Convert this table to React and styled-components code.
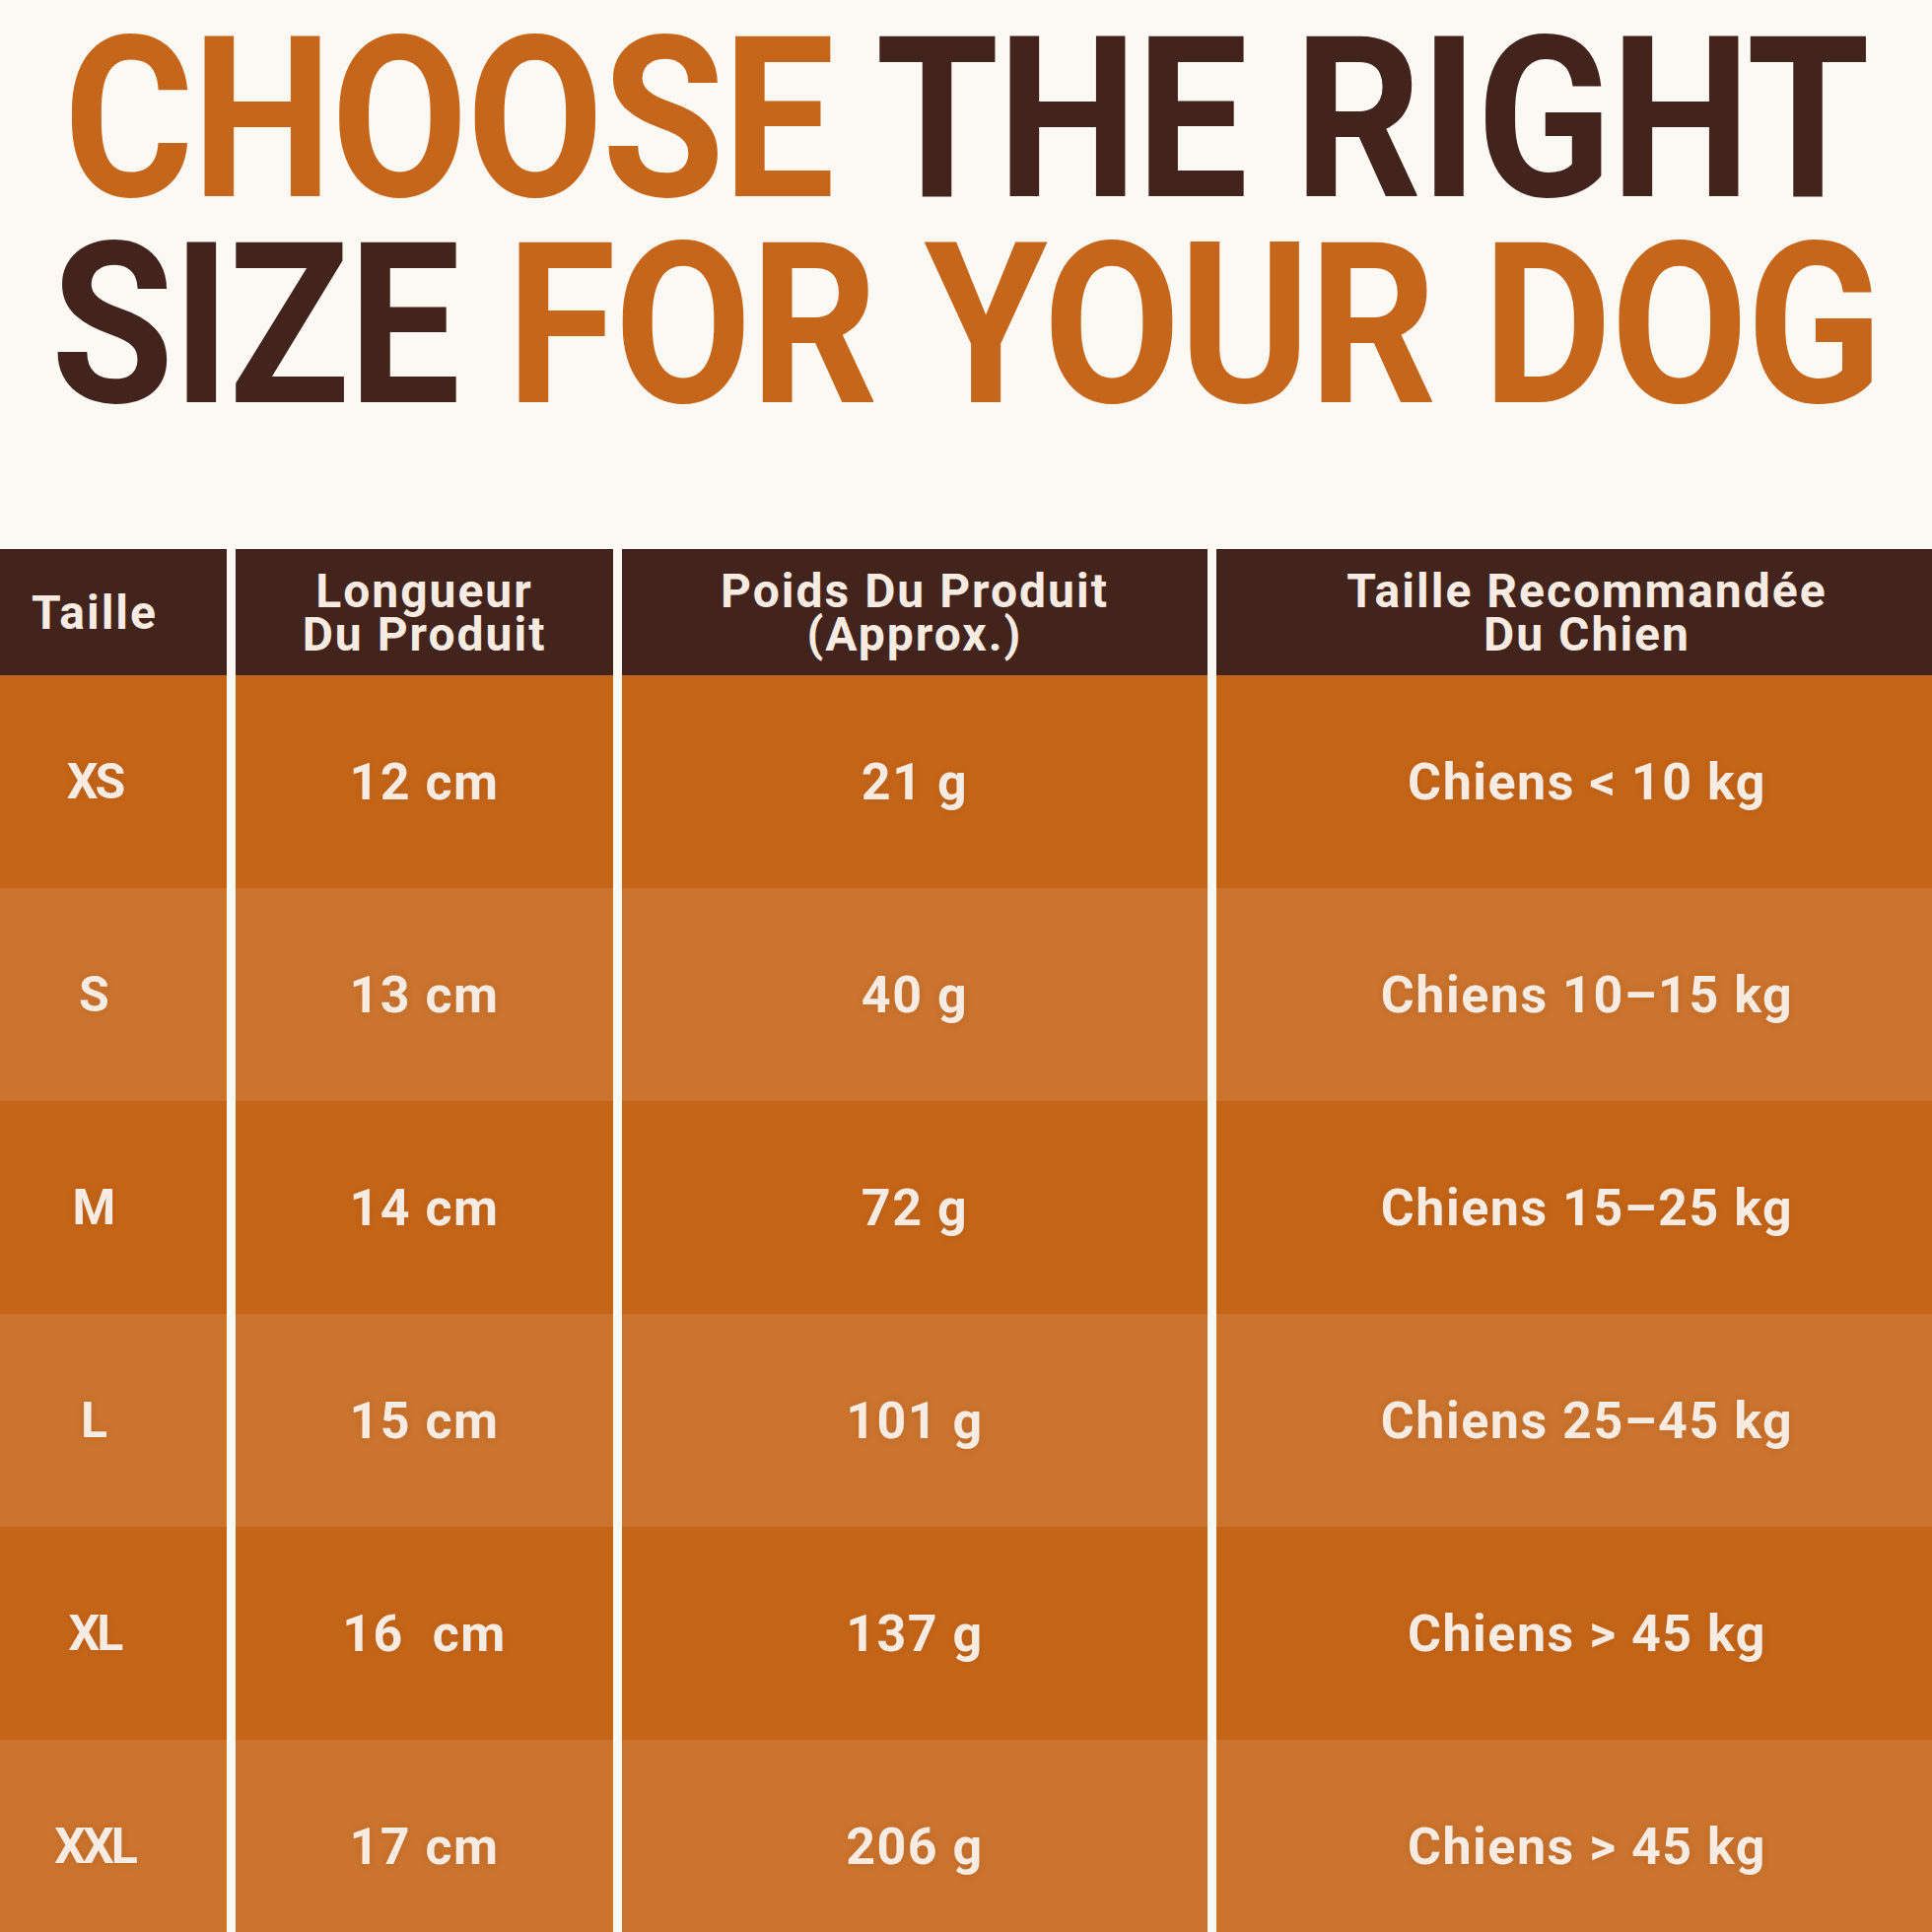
import React from 'react';
import styled, { createGlobalStyle } from 'styled-components';

const GlobalStyle = createGlobalStyle`
  html, body {
    margin: 0;
    padding: 0;
    background: #fcf9f4;
    overflow: hidden;
  }
`;

const colors = {
  orange: '#c5661a',
  brown: '#42241c',
  rowDark: '#c56517',
  rowLight: '#cb742d',
  cream: '#f7ebe2',
  page: '#fcf9f4',
};

const Page = styled.div`
  width: 1960px;
  height: 1960px;
  overflow: hidden;
  background: ${colors.page};
  font-family: Roboto, 'Liberation Sans', sans-serif;
`;

const TitleBlock = styled.header`
  box-sizing: border-box;
  height: 557px;
  padding-top: 17px;
  display: flex;
  flex-direction: column;
  align-items: center;
`;

const TitleLine = styled.div`
  flex: none;
  font-size: 229px;
  line-height: 209px;
  font-weight: 700;
  white-space: nowrap;
  letter-spacing: -2px;
  transform: scaleX(${(p) => p.$squeeze});
  transform-origin: center;
`;

const Word = styled.span`
  color: ${(p) => (p.$accent ? colors.orange : colors.brown)};
`;

const Table = styled.div`
  display: grid;
  grid-template-columns: 230px 383px 594px 1fr;
  column-gap: 9px;
`;

const Cell = styled.div`
  box-sizing: border-box;
  display: flex;
  align-items: center;
  justify-content: center;
  text-align: center;
  color: ${colors.cream};
  font-weight: 700;
  padding-left: ${(p) => (p.$col === 3 ? '26px' : '0')};
  padding-right: ${(p) => (p.$col === 0 ? '38px' : '0')};
`;

const HeadCell = styled(Cell)`
  height: 128px;
  padding-top: 2px;
  background: ${colors.brown};
  font-size: 48px;
  line-height: 44px;
  letter-spacing: 2px;
`;

const BodyCell = styled(Cell)`
  height: 216px;
  background: ${(p) => (p.$light ? colors.rowLight : colors.rowDark)};
  font-size: 52px;
  letter-spacing: 1.5px;
  white-space: pre;
  text-shadow: 0 0 8px rgba(80, 30, 0, 0.12);
`;

const SizeLabel = styled.span`
  font-size: 50px;
  letter-spacing: ${(p) => (p.$tight ? '-3px' : '1px')};
`;

const headers = [
  ['Taille'],
  ['Longueur', 'Du Produit'],
  ['Poids Du Produit', '(Approx.)'],
  ['Taille Recommandée', 'Du Chien'],
];

const rows = [
  { size: 'XS', length: '12 cm', weight: '21 g', dog: 'Chiens < 10 kg' },
  { size: 'S', length: '13 cm', weight: '40 g', dog: 'Chiens 10–15 kg' },
  { size: 'M', length: '14 cm', weight: '72 g', dog: 'Chiens 15–25 kg' },
  { size: 'L', length: '15 cm', weight: '101 g', dog: 'Chiens 25–45 kg' },
  { size: 'XL', length: '16  cm', weight: '137 g', dog: 'Chiens > 45 kg' },
  { size: 'XXL', length: '17 cm', weight: '206 g', dog: 'Chiens > 45 kg' },
];

const App = () => {
  return (
    <Page>
      <GlobalStyle />
      <TitleBlock>
        <TitleLine $squeeze={0.882}>
          <Word $accent>CHOOSE</Word> <Word>THE RIGHT</Word>
        </TitleLine>
        <TitleLine $squeeze={0.884}>
          <Word>SIZE</Word> <Word $accent>FOR YOUR DOG</Word>
        </TitleLine>
      </TitleBlock>
      <Table>
        {headers.map((lines, col) => (
          <HeadCell key={lines[0]} $col={col}>
            <div>
              {lines.map((l) => (
                <div key={l}>{l}</div>
              ))}
            </div>
          </HeadCell>
        ))}
        {rows.map((row, i) => (
          <React.Fragment key={row.size}>
            <BodyCell $col={0} $light={i % 2 === 1}>
              <SizeLabel $tight={row.size.startsWith('X')}>{row.size}</SizeLabel>
            </BodyCell>
            <BodyCell $col={1} $light={i % 2 === 1}>{row.length}</BodyCell>
            <BodyCell $col={2} $light={i % 2 === 1}>{row.weight}</BodyCell>
            <BodyCell $col={3} $light={i % 2 === 1}>{row.dog}</BodyCell>
          </React.Fragment>
        ))}
      </Table>
    </Page>
  );
};

export default App;
